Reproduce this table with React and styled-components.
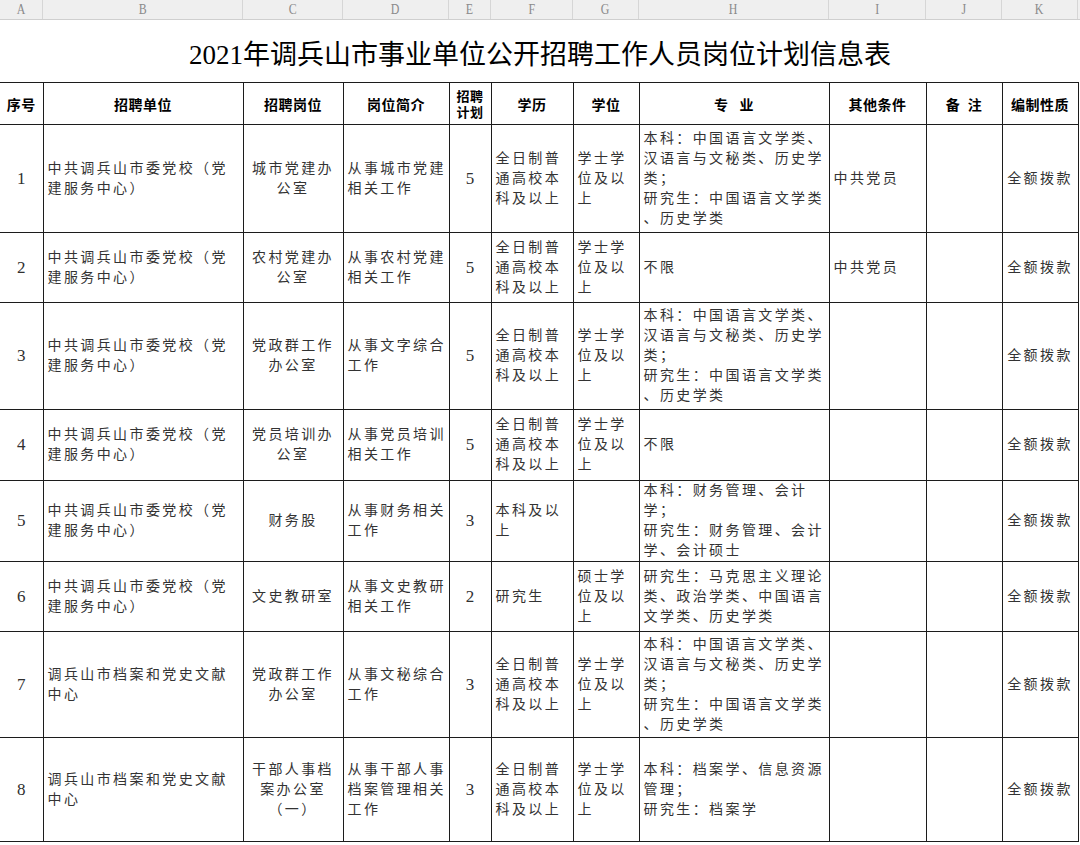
import React from "react";
import styled, { createGlobalStyle } from "styled-components";

const GlobalStyle = createGlobalStyle`
  html, body { margin: 0; padding: 0; background: #ffffff; }
  body { font-family: "Liberation Serif", "Noto Sans CJK SC", serif; }
`;

const COLS = [43, 200, 100, 106, 42, 82, 66, 190, 97, 76, 76];
const LETTERS = ["A", "B", "C", "D", "E", "F", "G", "H", "I", "J", "K"];

const Sheet = styled.div`
  width: 1080px;
  height: 845px;
  overflow: hidden;
  background: #fff;
`;

const ColumnBar = styled.div`
  display: grid;
  grid-template-columns: ${COLS.map((c) => c + "px").join(" ")};
  height: 20px;
  background: #efefef;
  border-bottom: 1px solid #cfcfcf;
  box-sizing: border-box;
`;

const ColLetter = styled.div`
  display: flex;
  align-items: center;
  justify-content: center;
  border-right: 1px solid #d6d6d6;
`;

const LetterText = styled.span`
  display: inline-block;
  font-family: "Liberation Serif", serif;
  font-size: 14px;
  color: #8a8a8a;
  transform: scaleX(0.85);
`;

const TitleRow = styled.div`
  height: 62px;
  display: flex;
  align-items: center;
  justify-content: center;
  font-family: "Liberation Serif", "Noto Sans CJK SC", serif;
  font-size: 27px;
  font-weight: 400;
  color: #000;
  padding-top: 2px;
  box-sizing: border-box;
`;

const Table = styled.table`
  width: 1078px;
  table-layout: fixed;
  border-collapse: collapse;
  font-family: "Liberation Serif", "Noto Sans CJK SC", serif;
`;

const HeadCell = styled.th`
  border: 1px solid #1c1c1c;
  border-left: ${(p) => (p.$first ? "none" : "1px solid #1c1c1c")};
  font-family: "Noto Sans CJK SC", sans-serif;
  font-weight: 700;
  font-size: ${(p) => (p.$small ? "13px" : "14px")};
  line-height: ${(p) => (p.$small ? "16px" : "18px")};
  letter-spacing: 0.5px;
  color: #000;
  text-align: center;
  vertical-align: middle;
  padding: 0;
  white-space: pre;
`;

const BodyRow = styled.tr`
  height: ${(p) => p.$h}px;
`;

const Cell = styled.td`
  border: 1px solid #1c1c1c;
  border-left: ${(p) => (p.$first ? "none" : "1px solid #1c1c1c")};
  text-align: ${(p) => p.$align};
  vertical-align: middle;
  padding: 0;
  padding-left: ${(p) => (p.$align === "left" ? "4px" : "0")};
  font-size: 14px;
  line-height: 20px;
  letter-spacing: 2.4px;
  color: #333;
  overflow: hidden;
`;

const NumCell = styled(Cell)`
  font-family: "Liberation Serif", serif;
  font-size: 17px;
  letter-spacing: 0;
  color: #303030;
`;

const Line = styled.span`
  display: block;
  white-space: nowrap;
`;

const MAJOR_CN = [
  "本科：中国语言文学类、",
  "汉语言与文秘类、历史学",
  "类；",
  "研究生：中国语言文学类",
  "、历史学类",
];
const PARTY = ["中共调兵山市委党校（党", "建服务中心）"];
const ARCHIVE = ["调兵山市档案和党史文献", "中心"];
const EDU = ["全日制普", "通高校本", "科及以上"];
const DEG = ["学士学", "位及以", "上"];

const ROWS = [
  { h: 108, unit: PARTY, post: ["城市党建办", "公室"], desc: ["从事城市党建", "相关工作"], n: 5, edu: EDU, deg: DEG, major: MAJOR_CN, other: ["中共党员"] },
  { h: 70, unit: PARTY, post: ["农村党建办", "公室"], desc: ["从事农村党建", "相关工作"], n: 5, edu: EDU, deg: DEG, major: ["不限"], other: ["中共党员"] },
  { h: 107, unit: PARTY, post: ["党政群工作", "办公室"], desc: ["从事文字综合", "工作"], n: 5, edu: EDU, deg: DEG, major: MAJOR_CN, other: [] },
  { h: 71, unit: PARTY, post: ["党员培训办", "公室"], desc: ["从事党员培训", "相关工作"], n: 5, edu: EDU, deg: DEG, major: ["不限"], other: [] },
  { h: 81, unit: PARTY, post: ["财务股"], desc: ["从事财务相关", "工作"], n: 3, edu: ["本科及以", "上"], deg: [], major: ["本科：财务管理、会计", "学；", "研究生：财务管理、会计", "学、会计硕士"], other: [] },
  { h: 70, unit: PARTY, post: ["文史教研室"], desc: ["从事文史教研", "相关工作"], n: 2, edu: ["研究生"], deg: ["硕士学", "位及以", "上"], major: ["研究生：马克思主义理论", "类、政治学类、中国语言", "文学类、历史学类"], other: [] },
  { h: 106, unit: ARCHIVE, post: ["党政群工作", "办公室"], desc: ["从事文秘综合", "工作"], n: 3, edu: EDU, deg: DEG, major: MAJOR_CN, other: [] },
  { h: 104, unit: ARCHIVE, post: ["干部人事档", "案办公室", "（一）"], desc: ["从事干部人事", "档案管理相关", "工作"], n: 3, edu: EDU, deg: DEG, major: ["本科：档案学、信息资源", "管理；", "研究生：档案学"], other: [] },
];

const HEADERS = [
  { t: "序号" },
  { t: "招聘单位" },
  { t: "招聘岗位" },
  { t: "岗位简介" },
  { t: "招聘\n计划", small: true },
  { t: "学历" },
  { t: "学位" },
  { t: "专   业" },
  { t: "其他条件" },
  { t: "备  注" },
  { t: "编制性质" },
];

const Lines = ({ items }) => items.map((s, i) => <Line key={i}>{s}</Line>);

export default function App() {
  return (
    <>
      <GlobalStyle />
      <Sheet>
        <ColumnBar>
          {LETTERS.map((l) => (
            <ColLetter key={l}>
              <LetterText>{l}</LetterText>
            </ColLetter>
          ))}
        </ColumnBar>
        <TitleRow>2021年调兵山市事业单位公开招聘工作人员岗位计划信息表</TitleRow>
        <Table>
          <colgroup>
            {COLS.map((w, i) => (
              <col key={i} style={{ width: w }} />
            ))}
          </colgroup>
          <thead>
            <BodyRow $h={42}>
              {HEADERS.map((h, i) => (
                <HeadCell key={i} $first={i === 0} $small={h.small}>
                  {h.t}
                </HeadCell>
              ))}
            </BodyRow>
          </thead>
          <tbody>
            {ROWS.map((r, i) => (
              <BodyRow key={i} $h={r.h}>
                <NumCell $first $align="center">{i + 1}</NumCell>
                <Cell $align="left"><Lines items={r.unit} /></Cell>
                <Cell $align="center"><Lines items={r.post} /></Cell>
                <Cell $align="left"><Lines items={r.desc} /></Cell>
                <NumCell $align="center">{r.n}</NumCell>
                <Cell $align="left"><Lines items={r.edu} /></Cell>
                <Cell $align="left"><Lines items={r.deg} /></Cell>
                <Cell $align="left"><Lines items={r.major} /></Cell>
                <Cell $align="left"><Lines items={r.other} /></Cell>
                <Cell $align="left" />
                <Cell $align="center"><Lines items={["全额拨款"]} /></Cell>
              </BodyRow>
            ))}
          </tbody>
        </Table>
      </Sheet>
    </>
  );
}
